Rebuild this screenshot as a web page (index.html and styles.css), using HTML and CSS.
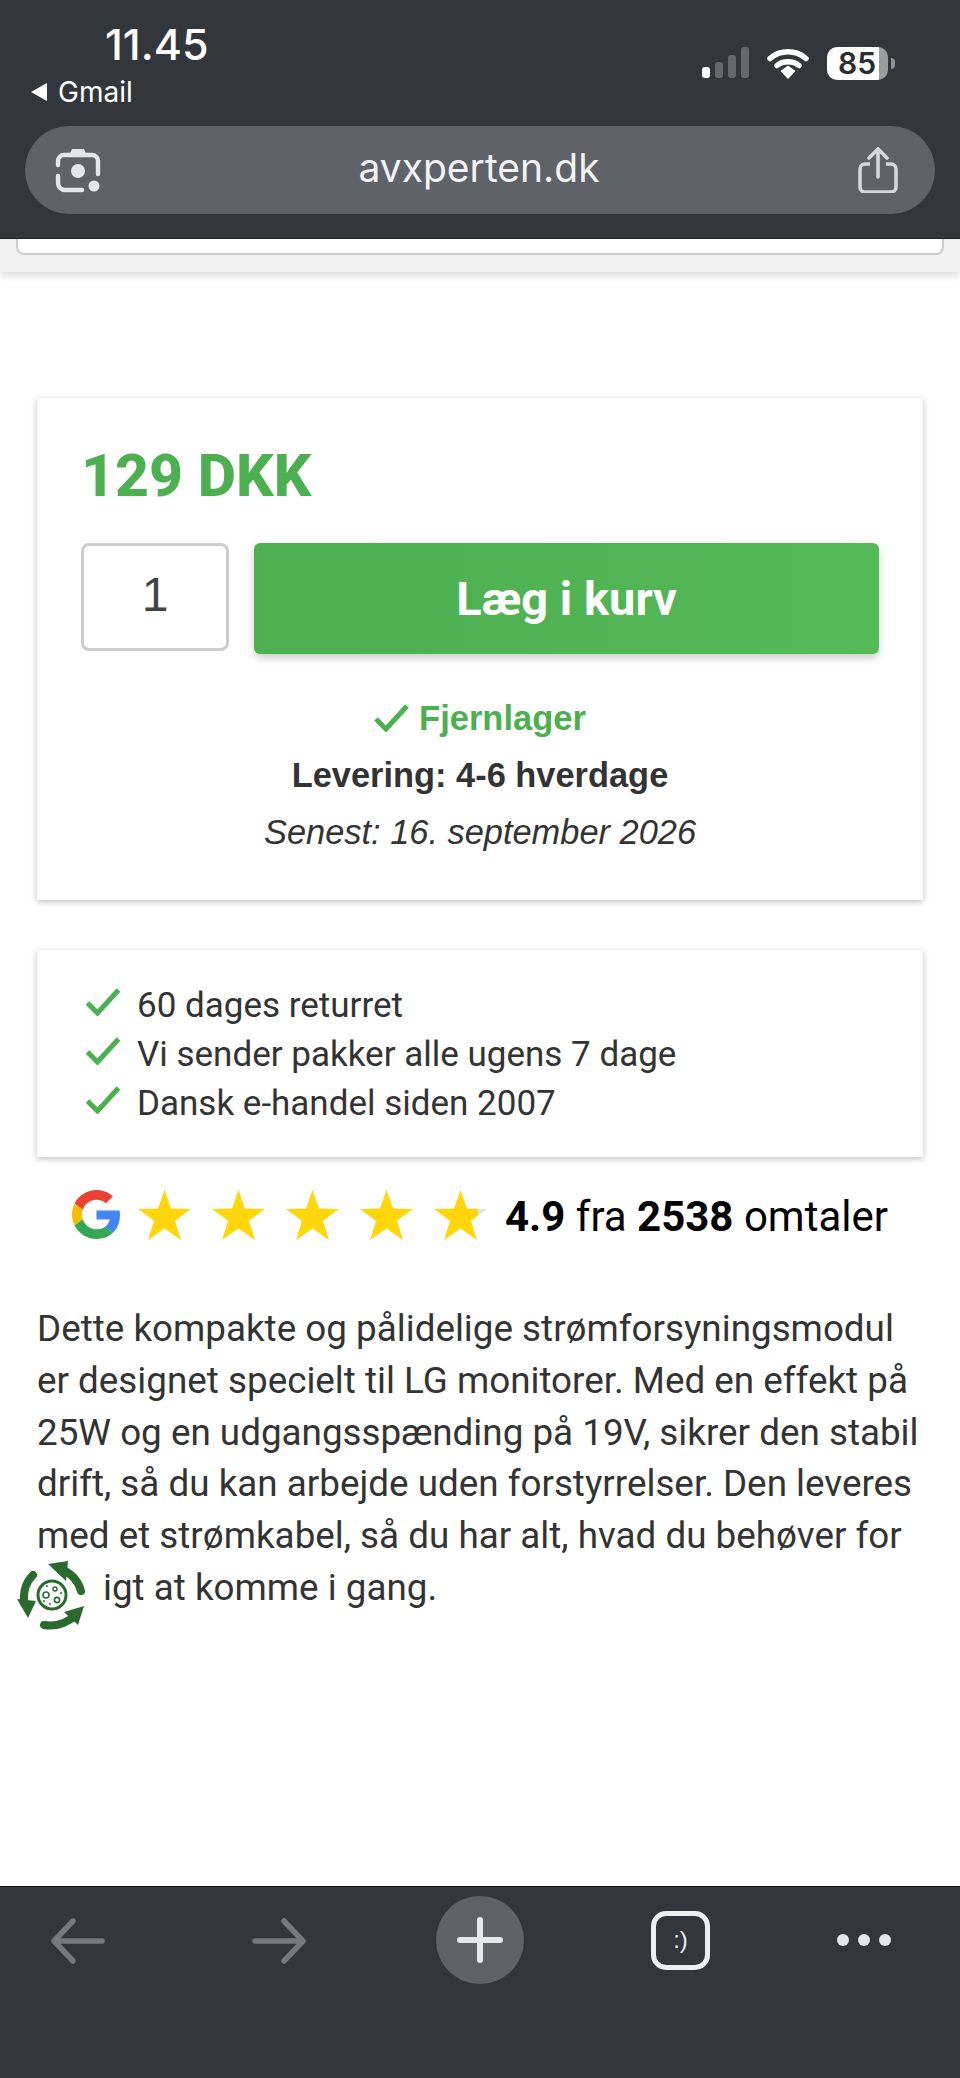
FILE: index.html

```html
<!DOCTYPE html>
<html lang="da">
<head>
  <meta charset="UTF-8">
  <meta name="viewport" content="width=device-width, initial-scale=1.0">
  <title>avxperten.dk</title>
  <link rel="stylesheet" href="styles.css">
</head>
<body>
  <div class="page">
    <!-- Phone status bar and address bar -->
    <header class="top-bar">
      <div class="status-row">
        <div class="status-left">
          <div class="clock">11.45</div>
          <div class="back-app"><span class="back-tri"></span>Gmail</div>
        </div>
        <div class="status-right">
          <div class="signal">
            <span class="bar bar-1"></span>
            <span class="bar bar-2"></span>
            <span class="bar bar-3"></span>
            <span class="bar bar-4"></span>
          </div>
          <svg class="wifi" width="42" height="32" viewBox="0 0 42 32">
            <path d="M3 11.5C13 2.5 29 2.5 39 11.5" fill="none" stroke="#fff" stroke-width="5.5" stroke-linecap="round"/>
            <path d="M10 18.5C16 13.5 26 13.5 32 18.5" fill="none" stroke="#fff" stroke-width="5.5" stroke-linecap="round"/>
            <path d="M13.5 24L21 18.6 28.5 24 21 32z" fill="#fff"/>
          </svg>
          <div class="battery"><span class="battery-num">85</span></div>
          <span class="battery-nub"></span>
        </div>
      </div>
      <div class="url-pill">
        <svg class="lens" width="46" height="46" viewBox="0 0 46 46">
          <path d="M14 9l3-7h12l3 7" fill="#e4e6e8"/>
          <path d="M3 18v-4a6 6 0 0 1 6-6h28a6 6 0 0 1 6 6v13M3 29v7a7 7 0 0 0 7 7h17" fill="none" stroke="#e4e6e8" stroke-width="4.4" stroke-linecap="round"/>
          <circle cx="23" cy="24" r="7" fill="#e4e6e8"/>
          <circle cx="39" cy="39" r="5.5" fill="#e4e6e8"/>
        </svg>
        <span class="url-text">avxperten.dk</span>
        <svg class="share" width="42" height="46" viewBox="0 0 42 46">
          <path d="M13 17H8a5 5 0 0 0-5 5v18a5 5 0 0 0 5 5h26a5 5 0 0 0 5-5V22a5 5 0 0 0-5-5h-5" fill="none" stroke="#d5d7d9" stroke-width="3.6"/>
          <path d="M21 30V3M12 11l9-9 9 9" fill="none" stroke="#d5d7d9" stroke-width="3.6" stroke-linecap="round"/>
        </svg>
      </div>
    </header>

    <!-- Sticky strip under the address bar -->
    <div class="strip"><div class="strip-card"></div></div>

    <main class="content">
      <section class="card buy-card">
        <div class="price">129 DKK</div>
        <div class="buy-row">
          <div class="qty">1</div>
          <button class="add-btn">Læg i kurv</button>
        </div>
        <div class="stock">
          <svg class="check" width="35" height="28" viewBox="0 0 35 28"><path d="M2 15l10 10L33 2" fill="none" stroke="#4caf50" stroke-width="5"/></svg>
          <span>Fjernlager</span>
        </div>
        <div class="delivery">Levering: 4-6 hverdage</div>
        <div class="latest">Senest: 16. september 2026</div>
      </section>

      <section class="card usp-card">
        <div class="usp">
          <svg class="check" width="36" height="28" viewBox="0 0 35 28"><path d="M2 15l10 10L33 2" fill="none" stroke="#4caf50" stroke-width="5"/></svg>
          <span>60 dages returret</span>
        </div>
        <div class="usp">
          <svg class="check" width="36" height="28" viewBox="0 0 35 28"><path d="M2 15l10 10L33 2" fill="none" stroke="#4caf50" stroke-width="5"/></svg>
          <span>Vi sender pakker alle ugens 7 dage</span>
        </div>
        <div class="usp">
          <svg class="check" width="36" height="28" viewBox="0 0 35 28"><path d="M2 15l10 10L33 2" fill="none" stroke="#4caf50" stroke-width="5"/></svg>
          <span>Dansk e-handel siden 2007</span>
        </div>
      </section>

      <div class="rating">
        <svg class="g-logo" width="49" height="49" viewBox="0 0 48 48">
          <path fill="#EA4335" d="M24 9.5c3.54 0 6.71 1.22 9.21 3.6l6.85-6.85C35.9 2.38 30.47 0 24 0 14.62 0 6.51 5.38 2.56 13.22l7.98 6.19C12.43 13.72 17.74 9.5 24 9.5z"/>
          <path fill="#4285F4" d="M46.98 24.55c0-1.57-.15-3.09-.38-4.55H24v9.02h12.94c-.58 2.96-2.26 5.48-4.78 7.18l7.73 6c4.51-4.18 7.09-10.36 7.09-17.65z"/>
          <path fill="#FBBC05" d="M10.53 28.59c-.48-1.45-.76-2.99-.76-4.59s.27-3.14.76-4.59l-7.98-6.19C.92 16.46 0 20.12 0 24c0 3.88.92 7.54 2.56 10.78l7.97-6.19z"/>
          <path fill="#34A853" d="M24 48c6.48 0 11.93-2.13 15.89-5.81l-7.73-6c-2.15 1.45-4.92 2.3-8.16 2.3-6.26 0-11.57-4.22-13.47-9.91l-7.98 6.19C6.51 42.62 14.62 48 24 48z"/>
        </svg>
        <div class="stars">
          <svg width="53" height="50" viewBox="0 0 53 50"><polygon class="star" points="26.5,0 33,18.5 53,18.9 37,30.8 42.9,50 26.5,38.5 10.1,50 16,30.8 0,18.9 20,18.5"/></svg>
          <svg width="53" height="50" viewBox="0 0 53 50"><polygon class="star" points="26.5,0 33,18.5 53,18.9 37,30.8 42.9,50 26.5,38.5 10.1,50 16,30.8 0,18.9 20,18.5"/></svg>
          <svg width="53" height="50" viewBox="0 0 53 50"><polygon class="star" points="26.5,0 33,18.5 53,18.9 37,30.8 42.9,50 26.5,38.5 10.1,50 16,30.8 0,18.9 20,18.5"/></svg>
          <svg width="53" height="50" viewBox="0 0 53 50"><polygon class="star" points="26.5,0 33,18.5 53,18.9 37,30.8 42.9,50 26.5,38.5 10.1,50 16,30.8 0,18.9 20,18.5"/></svg>
          <svg width="53" height="50" viewBox="0 0 53 50">
            <defs>
              <linearGradient id="starPart">
                <stop offset="0.83" stop-color="#ffd60a"/>
                <stop offset="0.83" stop-color="#dfe3ea"/>
              </linearGradient>
            </defs>
            <polygon fill="url(#starPart)" points="26.5,0 33,18.5 53,18.9 37,30.8 42.9,50 26.5,38.5 10.1,50 16,30.8 0,18.9 20,18.5"/>
          </svg>
        </div>
        <div class="rating-text"><strong>4.9</strong> fra <strong>2538</strong> omtaler</div>
      </div>

      <p class="description">Dette kompakte og pålidelige strømforsyningsmodul er designet specielt til LG monitorer. Med en effekt på 25W og en udgangsspænding på 19V, sikrer den stabil drift, så du kan arbejde uden forstyrrelser. Den leveres med et strømkabel, så du har alt, hvad du behøver for hurtigt at komme i gang.</p>

      <!-- Floating climate badge, lies over the text -->
      <div class="eco-badge">
        <svg width="90" height="90" viewBox="0 0 90 90">
          <g fill="none" stroke="#2a6a2e" stroke-linecap="round">
            <path d="M71 41C68 30 61 23 51 19" stroke-width="8"/>
            <path d="M23 25C15 33 13 42 14 53" stroke-width="8"/>
            <path d="M34 75C46 77 57 73 66 65" stroke-width="8"/>
            <circle cx="42" cy="45" r="14" stroke-width="3"/>
            <circle cx="36" cy="45" r="3" stroke-width="1.6"/>
            <circle cx="45" cy="39" r="2" stroke-width="1.4"/>
            <circle cx="47" cy="50" r="2.6" stroke-width="1.6"/>
          </g>
          <g fill="#2a6a2e">
            <polygon points="38,14 58,11 56,31"/>
            <polygon points="7,49 26,51 18,68"/>
            <polygon points="74,56 54,62 68,75"/>
            <circle cx="37" cy="36" r="1"/>
            <circle cx="51" cy="43" r="1"/>
            <circle cx="34" cy="51" r="1"/>
            <circle cx="40" cy="54" r="1"/>
          </g>
        </svg>
      </div>
    </main>

    <!-- Browser toolbar -->
    <nav class="bottom-bar">
      <svg class="nav-back" width="55" height="46" viewBox="0 0 55 46">
        <path d="M52 23H5M23 3L4 23l19 20" fill="none" stroke="#77797c" stroke-width="5.5" stroke-linecap="round" stroke-linejoin="round"/>
      </svg>
      <svg class="nav-forward" width="55" height="46" viewBox="0 0 55 46">
        <path d="M3 23h47M32 3l19 20-19 20" fill="none" stroke="#77797c" stroke-width="5.5" stroke-linecap="round" stroke-linejoin="round"/>
      </svg>
      <div class="new-tab">
        <svg width="46" height="46" viewBox="0 0 46 46">
          <path d="M23 3v40M3 23h40" fill="none" stroke="#e4e6e8" stroke-width="6" stroke-linecap="round"/>
        </svg>
      </div>
      <div class="tab-count">:)</div>
      <div class="more">
        <span class="dot"></span>
        <span class="dot"></span>
        <span class="dot"></span>
      </div>
    </nav>
  </div>
</body>
</html>
```

FILE: styles.css

```css
/* Basic Reset */
body, div, p, button, section, header, main, nav {
  margin: 0;
  padding: 0;
  box-sizing: border-box;
}

body {
  background-color: #fff;
  font-family: "Liberation Sans", Arial, sans-serif;
}

.page {
  width: 960px;
  height: 2078px;
  display: flex;
  flex-direction: column;
  overflow: hidden;
  position: relative;
}

/* Status bar and address bar */
.top-bar {
  height: 239px;
  flex: none;
  background-color: #33363a;
  font-family: Inter, sans-serif;
  color: #fff;
  position: relative;
  z-index: 2;
  border-bottom: 1px solid #222;
}

.status-row {
  height: 126px;
  display: flex;
  justify-content: space-between;
}

.status-left {
  padding: 20px 0 0 31px;
}

.clock {
  font-size: 43px;
  font-weight: 500;
  line-height: 48px;
  margin-left: 74px;
}

.back-app {
  display: flex;
  align-items: center;
  font-size: 28px;
  line-height: 32px;
  margin-top: 8px;
}

.back-tri {
  width: 0;
  height: 0;
  border-style: solid;
  border-width: 9px 16px 9px 0;
  border-color: transparent #fff transparent transparent;
  margin-right: 11px;
}

.status-right {
  display: flex;
  align-items: flex-start;
  padding: 47px 65px 0 0;
}

.signal {
  display: flex;
  align-items: flex-end;
  gap: 5px;
  height: 31px;
  margin-right: 18px;
}

.bar {
  width: 8px;
  border-radius: 3px;
  background-color: #66696c;
}

.bar-1 { height: 11px; background-color: #fff; }
.bar-2 { height: 16px; }
.bar-3 { height: 23px; }
.bar-4 { height: 31px; }

.wifi {
  margin-right: 18px;
}

.battery {
  width: 61px;
  height: 33px;
  border-radius: 10px;
  background: linear-gradient(to right, #fff 86%, #9a9c9e 86%);
  text-align: left;
}

.battery-num {
  display: block;
  color: #2b2d30;
  font-size: 30px;
  font-weight: 600;
  line-height: 33px;
  padding-left: 11px;
}

.battery-nub {
  width: 4px;
  height: 11px;
  margin: 11px 0 0 3px;
  border-radius: 0 4px 4px 0;
  background-color: #8d8f91;
}

.url-pill {
  height: 88px;
  margin: 0 25px;
  padding: 0 36px 0 30px;
  border-radius: 44px;
  background-color: #5f6367;
  display: flex;
  align-items: center;
  justify-content: space-between;
}

.url-text {
  font-size: 39px;
  line-height: 44px;
  margin-top: -5px;
  color: #f1f2f3;
}

/* Strip under the address bar */
.strip {
  height: 33px;
  flex: none;
  background-color: #f1f1f2;
  box-shadow: 0 3px 8px rgba(0, 0, 0, 0.16);
}

.strip-card {
  height: 16px;
  margin: 0 16px;
  background-color: #fff;
  border: 2px solid #ccc;
  border-top: none;
  border-radius: 0 0 8px 8px;
}

/* Page content */
.content {
  flex: 1;
  padding: 126px 37px 0;
}

.card {
  background-color: #fff;
  box-shadow: 0 2px 6px rgba(0, 0, 0, 0.25);
}

.buy-card {
  height: 502px;
  padding: 45px 44px 0;
  margin-bottom: 50px;
}

.price {
  font-family: Roboto, sans-serif;
  font-size: 59px;
  font-weight: 800;
  line-height: 66px;
  color: #4caf50;
}

.buy-row {
  display: flex;
  align-items: flex-start;
  margin-top: 34px;
}

.qty {
  width: 148px;
  height: 108px;
  flex: none;
  border: 3px solid #ccc;
  border-radius: 8px;
  text-align: center;
  font-size: 48px;
  line-height: 98px;
  color: #444;
  box-sizing: border-box;
}

.add-btn {
  width: 626px;
  height: 111px;
  margin-left: 25px;
  border: none;
  border-radius: 6px;
  background: linear-gradient(to right, #4caf50, #54b957);
  box-shadow: 0 4px 8px rgba(0, 0, 0, 0.2);
  color: #fff;
  font-family: Roboto, sans-serif;
  font-size: 47px;
  font-weight: 700;
}

.stock {
  display: flex;
  align-items: center;
  justify-content: center;
  gap: 10px;
  margin-top: 44px;
  font-size: 34.5px;
  font-weight: 700;
  line-height: 40px;
  color: #4caf50;
}

.delivery {
  margin-top: 17px;
  text-align: center;
  font-size: 34.4px;
  font-weight: 700;
  line-height: 40px;
  color: #333;
}

.latest {
  margin-top: 17px;
  text-align: center;
  font-size: 34.4px;
  font-style: italic;
  line-height: 40px;
  color: #333;
}

.usp-card {
  height: 207px;
  padding: 31px 0 0 48px;
}

.usp {
  display: flex;
  align-items: center;
  gap: 16px;
  height: 49px;
  font-family: Roboto, sans-serif;
  font-size: 35px;
  color: #333;
}

.usp .check {
  margin-top: -8px;
}

/* Google rating */
.rating {
  display: flex;
  align-items: center;
  margin-top: 31px;
  padding-left: 35px;
  color: #000;
  font-family: Roboto, sans-serif;
  font-size: 42px;
}

.stars {
  display: flex;
  gap: 21px;
  margin-left: 17px;
}

.star {
  fill: #ffd60a;
}

.rating-text {
  margin: 4px 0 0 18px;
}

.description {
  margin-top: 62px;
  font-family: Roboto, sans-serif;
  font-size: 36.8px;
  line-height: 51.8px;
  color: #333;
}

.eco-badge {
  position: absolute;
  left: 10px;
  top: 1550px;
  width: 93px;
  height: 90px;
  border-radius: 30%;
  background-color: #fff;
}

/* Browser toolbar */
.bottom-bar {
  height: 192px;
  flex: none;
  padding: 9px 0 0 50px;
  background-color: #33363a;
  border-top: 1px solid #111;
  display: flex;
  align-items: flex-start;
}

.nav-back {
  margin-top: 22px;
}

.nav-forward {
  margin: 22px 0 0 147px;
}

.new-tab {
  width: 88px;
  height: 88px;
  margin-left: 129px;
  border-radius: 50%;
  background-color: #5f6367;
  display: flex;
  align-items: center;
  justify-content: center;
}

.tab-count {
  width: 59px;
  height: 59px;
  margin: 15px 0 0 127px;
  border: 5px solid #eceef0;
  border-radius: 15px;
  box-sizing: border-box;
  text-align: center;
  font-size: 24px;
  line-height: 47px;
  color: #eceef0;
}

.more {
  display: flex;
  gap: 9px;
  margin: 38px 0 0 127px;
}

.dot {
  width: 12px;
  height: 12px;
  border-radius: 50%;
  background-color: #e4e6e8;
}
```
